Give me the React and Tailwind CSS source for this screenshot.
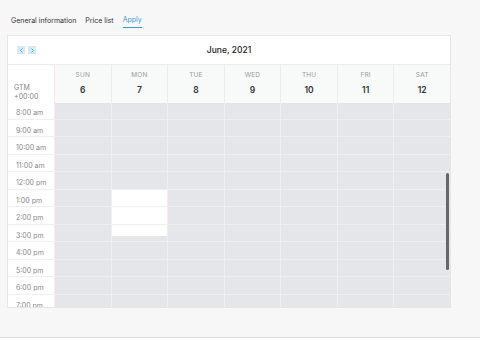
import { useEffect, useRef } from 'react';

const days = [
  ['SUN', 6],
  ['MON', 7],
  ['TUE', 8],
  ['WED', 9],
  ['THU', 10],
  ['FRI', 11],
  ['SAT', 12],
];

const hours = Array.from({ length: 24 }, (_, h) => {
  const suffix = h < 12 ? 'am' : 'pm';
  const hh = h % 12 === 0 ? 12 : h % 12;
  return `${hh}:00 ${suffix}`;
});

function Chevron({ dir }) {
  return (
    <svg className="w-[5px] h-[5px] text-[#4a9fdc]" viewBox="0 0 10 10" fill="none" stroke="currentColor">
      {dir === 'left' ? (
        <path d="M6.5 1.5L3 5l3.5 3.5" strokeWidth="1.6" strokeLinecap="round" strokeLinejoin="round" />
      ) : (
        <path d="M3.5 1.5L7 5 3.5 8.5" strokeWidth="1.6" strokeLinecap="round" strokeLinejoin="round" />
      )}
    </svg>
  );
}

export default function App() {
  const bodyRef = useRef(null);

  useEffect(() => {
    if (bodyRef.current) bodyRef.current.scrollTop = 141;
  }, []);

  return (
    <div className="w-[480px] h-[338px] bg-[#f7f7f7] border-b border-[#dcdcdc] font-['Inter','Open_Sans',sans-serif] overflow-hidden">
      <div className="flex items-center gap-[9px] px-[11px] pt-[13px] h-[30px] text-[7px]">
        <span className="text-[#333]">General information</span>
        <span className="text-[#333]">Price list</span>
        <span className="text-[#3a9ad9] border-b border-[#3a9ad9] pb-[1px]">Apply</span>
      </div>

      <div className="ml-[7px] mt-[5px] w-[444px] bg-white border border-[#e6e6e6]">
        <div className="relative h-[28px] flex items-center justify-center">
          <div className="absolute left-[9px] top-[10px] flex gap-[3px]">
            <div className="w-[8px] h-[8px] bg-[#d5e9f7] flex items-center justify-center">
              <Chevron dir="left" />
            </div>
            <div className="w-[8px] h-[8px] bg-[#d5e9f7] flex items-center justify-center">
              <Chevron dir="right" />
            </div>
          </div>
          <span className="text-[8.5px] font-medium text-[#222]">June, 2021</span>
        </div>

        <div className="grid grid-cols-[46px_repeat(7,1fr)] h-[39px] border-t border-[#ececec] bg-[#f8f9f9]">
          <div className="bg-white flex flex-col justify-end pb-[2px] pl-[6px] text-[7px] leading-[9px] text-[#888]">
            <span>GTM</span>
            <span>+00:00</span>
          </div>
          {days.map(([name, num]) => (
            <div key={name} className="border-l border-[#ececec] flex flex-col items-center pt-[6px]">
              <span className="text-[6.5px] text-[#999] tracking-wide">{name}</span>
              <span className="mt-[3px] text-[8.5px] font-semibold text-[#333]">{num}</span>
            </div>
          ))}
        </div>

        <div className="relative">
          <div
            ref={bodyRef}
            className="h-[204px] overflow-y-scroll [scrollbar-width:none] [&::-webkit-scrollbar]:hidden"
          >
            <div className="grid grid-cols-[46px_repeat(7,1fr)]">
              <div className="bg-white">
                {hours.map((h) => (
                  <div
                    key={h}
                    className="h-[17.5px] border-b border-[#efefef] flex items-center pt-[6px] pl-[8px] text-[7px] text-[#888]"
                  >
                    {h}
                  </div>
                ))}
              </div>
              {days.map(([name], di) => (
                <div key={name}>
                  {hours.map((h, hi) => {
                    const open = di === 1 && (hi === 13 || hi === 14);
                    const partial = di === 1 && hi === 15;
                    return (
                      <div
                        key={h}
                        className={`h-[17.5px] border-b border-l ${
                          open ? 'bg-white border-b-[#efefef] border-l-[#eeeff1]' : 'bg-[#e5e6e9] border-[#eeeff1]'
                        }`}
                      >
                        {partial && <div className="h-[11px] bg-white" />}
                      </div>
                    );
                  })}
                </div>
              ))}
            </div>
          </div>
          <div className="absolute right-[1px] top-[70px] w-[3px] h-[97px] rounded-full bg-[#666]" />
        </div>
      </div>
    </div>
  );
}
